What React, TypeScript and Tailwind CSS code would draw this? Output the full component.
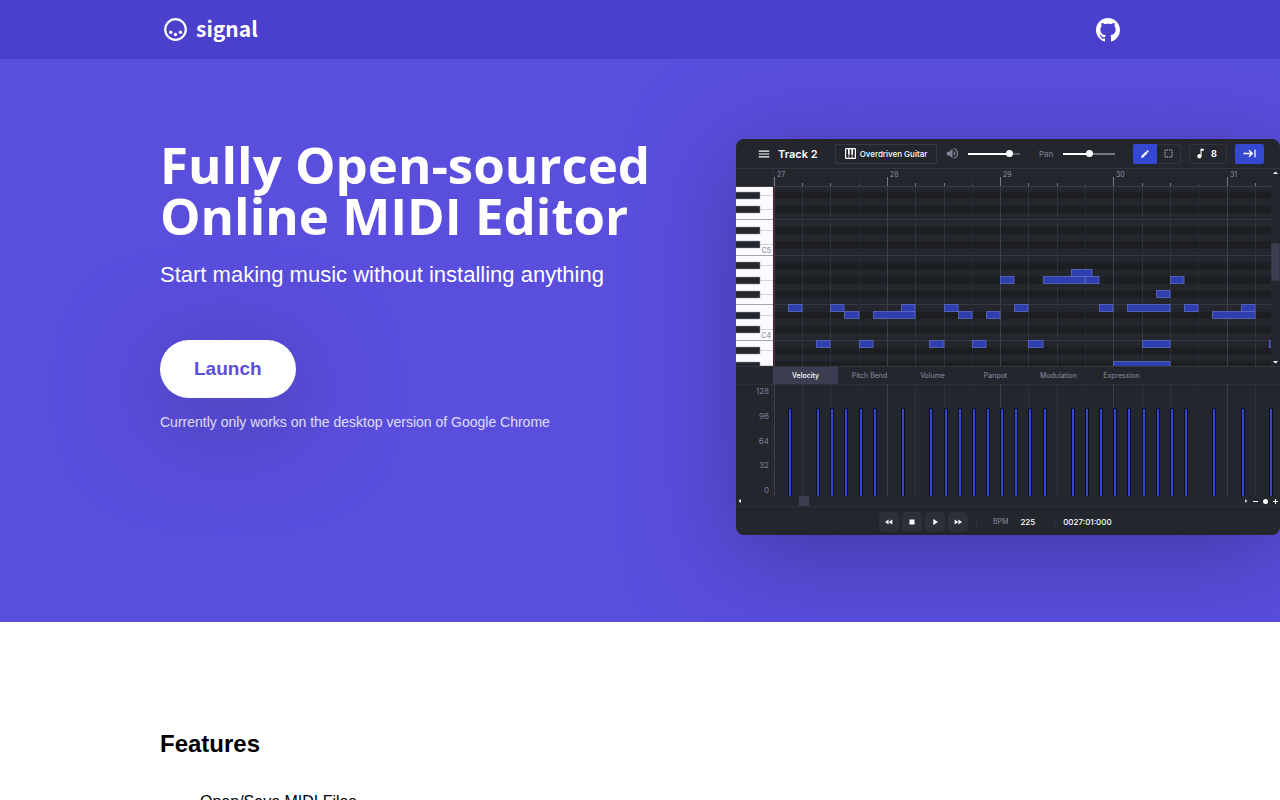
import type { ReactNode } from "react";
import {
  MdCreate,
  MdFastForward,
  MdFastRewind,
  MdMenu,
  MdMusicNote,
  MdPlayArrow,
  MdStop,
  MdVolumeUp,
} from "react-icons/md";

const KEYS = 37;
const STEP = 14.15;
const ROW = 7.083;
const ROLL_TOP = 18;
const C5_LINE = 68.3 + ROLL_TOP;

type Note = { start: number; length: number; row: number };

// Rows count downwards from the line under C5; a step is an eighth note.
const notes: Note[] = [
  [1, 1, 7], [3, 1, 12], [4, 1, 7], [5, 1, 8], [6, 1, 12], [7, 3, 8], [9, 1, 7],
  [11, 1, 12], [12, 1, 7], [13, 1, 8], [14, 1, 12], [15, 1, 8], [16, 1, 3],
  [17, 1, 7], [18, 1, 12], [19, 3, 3], [22, 1, 3], [21, 1.5, 2], [23, 1, 7],
  [24, 4, 15], [25, 3, 7], [26, 2, 12], [27, 1, 5], [28, 1, 3], [29, 1, 7],
  [31, 3, 8], [33, 1, 7], [35, 1, 12],
].map(([start, length, row]) => ({ start, length, row }));

const blackRows = [-9, -7, -4, -2, 1, 3, 5, 8, 10, 13, 15];
const boundaries = [-5, 0, 7, 12];
const beats = Array.from({ length: 18 }, (_, i) => i);
const stepX = (n: number) => Math.floor(KEYS + 1.2 + n * STEP);
const rowY = (r: number) => C5_LINE + r * ROW;

function BeatLines({ top, bottom }: { top: number; bottom: number }) {
  return (
    <g>
      {beats.map((b) => (
        <rect
          key={b}
          x={stepX(b * 2)}
          y={top}
          width="1"
          height={bottom - top}
          fill={b % 4 === 0 ? "#3c3e4b" : b % 4 === 3 ? "#282a33" : "#2f313b"}
        />
      ))}
    </g>
  );
}

function PianoRoll() {
  return (
    <svg className="block h-[197px] min-w-0 flex-1" role="img" aria-label="Piano roll">
      <rect width="100%" height="197" fill="#24262e" />
      {blackRows.map((r) => (
        <rect key={r} x={KEYS} y={rowY(r)} width="100%" height={ROW} fill="#1d1e22" />
      ))}
      {boundaries.map((r) => (
        <rect key={r} x={KEYS} y={Math.round(rowY(r) - 0.5)} width="100%" height="1" fill="#353741" />
      ))}
      <BeatLines top={18} bottom={197} />
      {notes.map((n) => (
        <rect
          key={`${n.start}-${n.row}`}
          x={stepX(n.start) + 0.5}
          y={Math.round(rowY(n.row) - 0.5) + 0.5}
          width={stepX(n.start + n.length) - stepX(n.start) - 0.5}
          height="7"
          fill="#303fb0"
          stroke="#5e6bc6"
          strokeOpacity="0.8"
        />
      ))}
      <rect x={KEYS} y="18" width="1" height="179" fill="#5c1522" />

      <rect width="100%" height="18" fill="#24262e" />
      <rect y="17" width="100%" height="1" fill="#3c3e49" />
      <rect x={KEYS} width="1" height="18" fill="#30323c" />
      {beats.map((b) => {
        const x = stepX(b * 2);
        const bar = b % 4 === 0;
        return (
          <g key={b}>
            <rect
              x={x}
              y={bar ? 8 : 14}
              width="1"
              height={bar ? 9 : 3}
              fill={b % 4 === 3 ? "#454753" : "#747785"}
            />
            {bar && (
              <text x={x + 3} y="8" fill="#8f93a5" fontSize="7" fontFamily="Inter, sans-serif">
                {27 + b / 4}
              </text>
            )}
          </g>
        );
      })}

      <rect y="18" width={KEYS} height="179" fill="#fbfbff" />
      {blackRows.map((r) => (
        <g key={r}>
          <rect x="24" y={Math.round(rowY(r) + 3)} width="13" height="1" fill="#d3d4d9" />
          <rect x="-1" y={Math.round(rowY(r))} width="25" height="7" fill="#24262e" stroke="#9a9ba2" strokeWidth="0.500" />
        </g>
      ))}
      {boundaries.map((r) => (
        <rect key={r} y={Math.round(rowY(r) - 0.5)} width={KEYS} height="1" fill="#a5a6ad" />
      ))}
      <g fill="#777b8e" fontSize="7" fontFamily="Inter, sans-serif" textAnchor="end">
        <text x="35" y={rowY(0) - 2}>C5</text>
        <text x="35" y={rowY(12) - 2}>C4</text>
      </g>
    </svg>
  );
}

function VerticalScroll() {
  return (
    <svg className="h-[197px] w-[9px] shrink-0 bg-[#24262e]" aria-hidden="true">
      <path d="M2 5 L4.500 2.500 L7 5 Z M2 192 L4.500 194.500 L7 192 Z" fill="#ffffff" />
      <rect y="74" width="9" height="38" fill="#3b3e50" stroke="#2c2e38" />
    </svg>
  );
}

function VelocityGraph() {
  return (
    <svg className="block h-[112px] w-full" role="img" aria-label="Velocity graph">
      <rect width="100%" height="1" fill="#2d2f38" />
      <rect x={KEYS - 1} width="1" height="112" fill="#2d2f38" />
      <BeatLines top={0} bottom={112} />
      <g fill="#7b7f92" fontSize="8" fontFamily="Inter, sans-serif" textAnchor="end">
        {[128, 96, 64, 32, 0].map((v, i) => (
          <text key={v} x="33" y={10 + i * 24.8}>{v}</text>
        ))}
      </g>
      {notes.map((n) => {
        const x = stepX(n.start);
        return (
          <g key={`${n.start}-${n.row}`}>
            <rect x={x} y="24" width="4" height="88" fill="#0b0d28" />
            <rect x={x + 1} y="25" width="2" height="87" fill="#3546cf" />
          </g>
        );
      })}
    </svg>
  );
}

function Slider({ label, value, fill }: { label: string; value: number; fill: string }) {
  return (
    <input
      type="range"
      aria-label={label}
      defaultValue={value}
      className={`h-2 w-[52px] appearance-none bg-[length:100%_2px] bg-center bg-no-repeat [&::-webkit-slider-thumb]:size-[7px] [&::-webkit-slider-thumb]:appearance-none [&::-webkit-slider-thumb]:rounded-full [&::-webkit-slider-thumb]:bg-white ${fill}`}
    />
  );
}

function PianoIcon() {
  return (
    <svg className="size-[11px] shrink-0" viewBox="0 0 11 11" aria-hidden="true">
      <rect x="0.600" y="0.600" width="9.800" height="9.800" rx="0.600" fill="none" stroke="currentColor" strokeWidth="1.200" />
      <path d="M3 1 H4.700 V6.500 H3 Z M6.300 1 H8 V6.500 H6.300 Z" fill="currentColor" />
      <path d="M3.850 6 V10 M7.150 6 V10" stroke="currentColor" strokeWidth="0.700" />
    </svg>
  );
}

function TabArrowIcon() {
  return (
    <svg className="h-[9px] w-[13px]" viewBox="0 0 13 9" fill="none" stroke="currentColor" strokeWidth="1.300" aria-hidden="true">
      <path d="M0.500 4.500 H9 M6 1.200 L9.300 4.500 L6 7.800 M12 0.800 V8.200" />
    </svg>
  );
}

function Toolbar() {
  return (
    <div className="flex h-[30px] items-center border-b border-[#32343e] pr-4 pl-[21px] text-[8px] leading-[10px] font-semibold text-white">
      <button aria-label="Menu" className="shrink-0">
        <MdMenu className="size-[14px]" />
      </button>
      <span className="ml-[7px] w-[57px] shrink-0 text-[11px] leading-4">Track 2</span>
      <button className="flex h-[20px] w-[102px] shrink-0 items-center justify-center gap-1 rounded-[2px] border border-[#363843]">
        <PianoIcon />
        <span className="font-medium whitespace-nowrap">Overdriven Guitar</span>
      </button>
      <MdVolumeUp className="mr-2 ml-2 size-[15px] shrink-0 text-[#7f8396]" />
      <Slider
        label="Volume"
        value={84}
        fill="bg-[linear-gradient(90deg,#ffffff_80%,#5f6169_80%)]"
      />
      <span className="mr-2 ml-[19px] w-[16px] font-normal text-[#7f8396]">Pan</span>
      <Slider
        label="Pan"
        value={50}
        fill="bg-[linear-gradient(90deg,#ffffff_50%,#777982_50%)]"
      />
      <div className="ml-auto flex h-[20px] shrink-0">
        <button aria-label="Pencil" className="flex w-6 items-center justify-center rounded-l-[2px] bg-[#3548d2]">
          <MdCreate className="size-[10px]" />
        </button>
        <button aria-label="Select" className="flex w-6 items-center justify-center rounded-r-[2px] border border-l-0 border-[#32343e]">
          <svg className="size-[9px]" viewBox="0 0 9 9" aria-hidden="true">
            <rect x="1" y="1" width="7" height="7" fill="none" stroke="#c4c6d0" strokeDasharray="1.400 0.933" strokeDashoffset="0.700" />
          </svg>
        </button>
      </div>
      <button className="ml-2 flex h-[20px] w-[38px] shrink-0 items-center gap-1 rounded-[2px] border border-[#32343e] pl-1 text-[9px] font-bold">
        <MdMusicNote className="size-[13px]" />8
      </button>
      <button aria-label="Auto scroll" className="ml-2 flex h-[20px] w-[29px] shrink-0 items-center justify-center rounded-[2px] bg-[#3548d2]">
        <TabArrowIcon />
      </button>
    </div>
  );
}

function Tabs() {
  return (
    <div className="flex h-[18px] border-t border-[#32343e] pl-[37px] text-[7px] leading-[10px] text-[#8a8ea0]">
      <button className="w-[65px] bg-[#3b3e50] font-medium text-white">Velocity</button>
      {["Pitch Bend", "Volume", "Panpot", "Modulation", "Expression"].map((name) => (
        <button key={name} className="w-[63px] whitespace-nowrap">
          {name}
        </button>
      ))}
    </div>
  );
}

function HorizontalScroll() {
  return (
    <div className="flex h-[11px] items-center justify-between border-b border-[#2d2f38]">
      <svg className="h-[10px] w-[80px]" aria-hidden="true">
        <path d="M5 3 L2.500 5 L5 7 Z" fill="#ffffff" />
        <rect x="63" width="10" height="10" fill="#3b3e50" />
      </svg>
      <svg className="h-[10px] w-[36px]" aria-hidden="true">
        <path d="M1 3 L3.500 5 L1 7 Z" fill="#c4c6d0" />
        <circle cx="21.500" cy="5.500" r="2.500" fill="#ffffff" />
        <path d="M9 5.500 H14 M29 5.500 H34 M31.500 3 V8" stroke="#ffffff" />
      </svg>
    </div>
  );
}

function TransportButton({ label, children }: { label: string; children: ReactNode }) {
  return (
    <button aria-label={label} className="flex size-5 items-center justify-center rounded-[5px] bg-[#2e3039]">
      {children}
    </button>
  );
}

function Transport() {
  return (
    <div className="flex h-[28px] items-center pt-px pl-[143px] text-[8px] leading-[10px] font-medium text-white">
      <div className="flex gap-[3px]">
        <TransportButton label="Rewind"><MdFastRewind className="size-[10px]" /></TransportButton>
        <TransportButton label="Stop"><MdStop className="size-[10px]" /></TransportButton>
        <TransportButton label="Play"><MdPlayArrow className="size-[10px]" /></TransportButton>
        <TransportButton label="Fast forward"><MdFastForward className="size-[10px]" /></TransportButton>
      </div>
      <span className="ml-2 h-2 w-px bg-[#32343e]" />
      <span className="ml-4 text-[7px] font-normal text-[#8a8ea0]">BPM</span>
      <span className="ml-3">225</span>
      <span className="mr-2 ml-[19px] h-2 w-px bg-[#32343e]" />
      <span>0027:01:000</span>
    </div>
  );
}

function Editor() {
  return (
    <div className="min-w-0 flex-1 overflow-hidden rounded-lg bg-[#24262e] font-[Inter,sans-serif] shadow-[0_20px_100px_#4338a3]">
      <Toolbar />
      <div className="flex">
        <PianoRoll />
        <VerticalScroll />
      </div>
      <Tabs />
      <VelocityGraph />
      <HorizontalScroll />
      <Transport />
    </div>
  );
}

function GitHubMark() {
  return (
    <svg className="size-6" viewBox="0 0 16 16" fill="currentColor" aria-hidden="true">
      <path
        fillRule="evenodd"
        d="M8 0C3.58 0 0 3.58 0 8c0 3.54 2.29 6.53 5.47 7.59.4.07.55-.17.55-.38 0-.19-.01-.82-.01-1.49-2.01.37-2.53-.49-2.69-.94-.09-.23-.48-.94-.82-1.13-.28-.15-.68-.52-.01-.53.63-.01 1.08.58 1.23.82.72 1.21 1.87.87 2.33.66.07-.52.28-.87.51-1.07-1.78-.2-3.64-.89-3.64-3.95 0-.87.31-1.59.82-2.15-.08-.2-.36-1.02.08-2.12 0 0 .67-.21 2.2.82.64-.18 1.32-.27 2-.27s1.36.09 2 .27c1.53-1.04 2.2-.82 2.2-.82.44 1.1.16 1.92.08 2.12.51.56.82 1.27.82 2.15 0 3.07-1.87 3.75-3.65 3.95.29.25.54.73.54 1.48 0 1.07-.01 1.93-.01 2.2 0 .21.15.46.55.38A8.01 8.01 0 0 0 16 8c0-4.42-3.58-8-8-8z"
      />
    </svg>
  );
}

function Logo() {
  return (
    <a href="/" className="flex items-center gap-2 text-white">
      <svg className="ml-1 size-6" viewBox="0 0 24 24" aria-hidden="true">
        <circle cx="11.500" cy="11.500" r="10.300" fill="none" stroke="currentColor" strokeWidth="2.200" />
        <circle cx="6.700" cy="14.200" r="1.700" fill="currentColor" />
        <circle cx="11.500" cy="16.500" r="1.700" fill="currentColor" />
        <circle cx="16.500" cy="14.200" r="1.700" fill="currentColor" />
      </svg>
      <span className="pb-1 font-['Noto_Sans_CJK_JP',sans-serif] text-[21px] leading-6 font-bold">signal</span>
    </a>
  );
}

export default function App() {
  return (
    <div className="min-h-screen overflow-x-hidden bg-white font-['Liberation_Sans',sans-serif] text-black">
      <header className="bg-[#4b40cb]">
        <div className="mx-auto flex h-[59px] max-w-[960px] items-center justify-between">
          <Logo />
          <a href="https://github.com/ryohey/signal" aria-label="GitHub" className="text-white">
            <GitHubMark />
          </a>
        </div>
      </header>
      <section className="overflow-hidden bg-[#5a4edd] pt-20 pb-[87px] pl-[calc(50%-480px)] text-white">
        <div className="flex items-start">
          <div className="w-[576px] shrink-0">
            <h1 className="font-['Open_Sans',sans-serif] text-[51px] leading-[51px] font-bold">
              Fully Open-sourced
              <br />
              Online MIDI Editor
            </h1>
            <p className="mt-5 text-[22px] leading-7">Start making music without installing anything</p>
            <button className="mt-[51px] rounded-[29px] bg-white px-[34px] py-[15px] text-[19px] leading-7 font-bold text-[#5a4edd] shadow-[0_20px_100px_#463ba0]">
              Launch
            </button>
            <p className="mt-4 text-[14px] leading-4 text-white/80">
              Currently only works on the desktop version of Google Chrome
            </p>
          </div>
          <Editor />
        </div>
      </section>
      <main className="mx-auto max-w-[960px] pt-[106px] pb-20">
        <h2 className="text-2xl font-bold">Features</h2>
        <ul className="mt-[30px] list-disc pl-10">
          <li>Open/Save MIDI Files</li>
        </ul>
      </main>
    </div>
  );
}
